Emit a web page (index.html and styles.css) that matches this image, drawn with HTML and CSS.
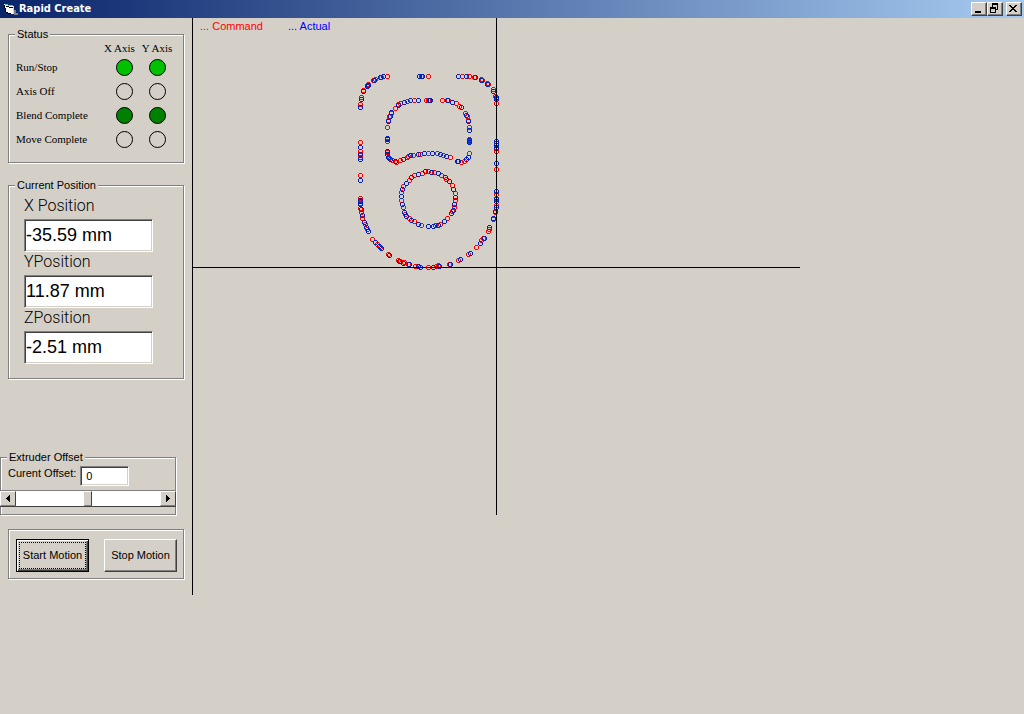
FILE: index.html
```html
<!DOCTYPE html>
<html lang="en">
<head>
<meta charset="utf-8">
<title>Rapid Create</title>
<link rel="stylesheet" href="styles.css">
</head>
<body>
<header class="titlebar">
  <svg class="app-icon" width="15" height="13" viewBox="0 0 15 13" shape-rendering="crispEdges" aria-hidden="true">
    <path d="M0 1h4v1h5v3H0z" fill="#fff"/>
    <path d="M1 1h3v1h5v1H4V2H1z" fill="#00e0e0"/>
    <path d="M1 4h4v1h4v6H5v-1H2V9H1z" fill="#fff"/>
    <path d="M0 2h1v3H0zM1 5h1v4H1zM2 3h3v1H2zM5 4h5v1H5zM2 9h2v1H2zM4 10h3v1H4z" fill="#000"/>
    <path d="M9 3h1v8H9z" fill="#d4d0c8"/>
    <path d="M10 7h2v3h2v2h-4z" fill="#808080"/>
  </svg>
  <h1 class="title">Rapid Create</h1>
  <div class="window-controls">
    <button class="win-btn" type="button" aria-label="Minimize"><svg width="12" height="10" viewBox="0 0 12 10" shape-rendering="crispEdges"><path d="M3 8h6v2H3z"/></svg></button>
    <button class="win-btn" type="button" aria-label="Restore"><svg width="12" height="10" viewBox="0 0 12 10" shape-rendering="crispEdges"><path fill-rule="evenodd" d="M4 0h6v7H8V6h1V2H5v2H4zM2 4h6v6H2zM3 6v3h4V6z"/></svg></button>
    <button class="win-btn win-close" type="button" aria-label="Close"><svg width="12" height="10" viewBox="0 0 12 10" shape-rendering="crispEdges"><path d="M2 2h2v1h1v1h2V3h1V2h2v1H9v1H8v1H7v1h1v1h1v1h1v1H8V8H7V7H5v1H4v1H2V8h1V7h1V6h1V5H4V4H3V3H2z"/></svg></button>
  </div>
</header>
<main class="workspace">
  <section class="sidebar">
    <fieldset class="group status">
      <legend>Status</legend>
      <table class="axes">
        <thead>
          <tr><td class="col-name"></td><th class="col-x" scope="col">X Axis</th><th class="col-y" scope="col">Y Axis</th></tr>
        </thead>
        <tbody>
          <tr><th scope="row">Run/Stop</th><td class="cell-x"><span class="led led-on"></span></td><td><span class="led led-on"></span></td></tr>
          <tr><th scope="row">Axis Off</th><td class="cell-x"><span class="led"></span></td><td><span class="led"></span></td></tr>
          <tr><th scope="row">Blend Complete</th><td class="cell-x"><span class="led led-done"></span></td><td><span class="led led-done"></span></td></tr>
          <tr><th scope="row">Move Complete</th><td class="cell-x"><span class="led"></span></td><td><span class="led"></span></td></tr>
        </tbody>
      </table>
    </fieldset>

    <fieldset class="group position">
      <legend>Current Position</legend>
      <div class="readouts">
        <label for="pos-x">X Position</label>
        <input id="pos-x" class="sunken" type="text" value="-35.59 mm">
        <label for="pos-y">YPosition</label>
        <input id="pos-y" class="sunken" type="text" value="11.87 mm">
        <label for="pos-z">ZPosition</label>
        <input id="pos-z" class="sunken" type="text" value="-2.51 mm">
      </div>
    </fieldset>

    <fieldset class="group extruder">
      <legend>Extruder Offset</legend>
      <div class="offset-row">
        <label for="offset">Curent Offset:</label>
        <input id="offset" class="sunken" type="text" value="0">
      </div>
      <div class="scrollbar">
        <button class="arrow" type="button" aria-label="Decrease offset"><svg width="4" height="7" viewBox="0 0 4 7" shape-rendering="crispEdges"><path d="M3 0h1v7H3V6H2V5H1V4H0V3h1V2h1V1h1z"/></svg></button>
        <input class="track" type="range" min="-100" max="100" value="0" aria-label="Extruder offset">
        <button class="arrow" type="button" aria-label="Increase offset"><svg width="4" height="7" viewBox="0 0 4 7" shape-rendering="crispEdges"><path d="M0 0h1v1h1v1h1v1h1v1H3v1H2v1H1v1H0z"/></svg></button>
      </div>
    </fieldset>

    <div class="group motion">
      <button class="motion-btn motion-default" type="button"><span>Start Motion</span></button>
      <button class="motion-btn" type="button"><span>Stop Motion</span></button>
    </div>
  </section>

  <section class="plot">
    <svg class="chart" width="608" height="498" viewBox="193 18 608 498" shape-rendering="crispEdges" role="img" aria-label="Tool path">
      <defs>
        <marker id="cmd" markerWidth="5" markerHeight="5" refX="2.5" refY="2.5" markerUnits="userSpaceOnUse"><path class="dot-cmd" d="M1 0h3v1h1v3H4v1H1V4H0V1h1zM1 1v3h3V1z"/></marker>
        <marker id="act" markerWidth="5" markerHeight="5" refX="2.5" refY="2.5" markerUnits="userSpaceOnUse"><path class="dot-act" d="M1 0h3v1h1v3H4v1H1V4H0V1h1zM1 1v3h3V1z"/></marker>
      </defs>
      <!-- outer contour -->
      <polyline class="command" points="428.5,76.5 421.5,76.5 387.5,76.5 381.5,77.5 375.5,79.5 373.5,80.5 368.5,84.5 367.5,85.5 363.5,90.5 361.5,97.5 360.5,104.5 360.5,142.5 360.5,151.5 360.5,157.5 360.5,175.5 360.5,198.5 360.5,203.5 360.5,208.5 361.5,212.5 362.5,218.5 365.5,224.5 367.5,229.5 372.5,239.5 377.5,244.5 380.5,247.5 388.5,254.5 398.5,260.5 400.5,261.5 404.5,262.5 408.5,264.5 415.5,266.5 418.5,266.5 428.5,267.5 436.5,266.5 438.5,265.5 449.5,264.5 458.5,260.5 468.5,254.5 476.5,247.5 481.5,240.5 483.5,238.5 488.5,231.5 489.5,229.5 493.5,219.5 495.5,212.5 496.5,205.5 496.5,198.5 496.5,194.5 496.5,169.5 496.5,151.5 496.5,147.5 496.5,143.5 496.5,103.5 496.5,98.5 495.5,96.5 493.5,89.5 488.5,84.5 487.5,83.5 482.5,80.5 481.5,79.5 474.5,77.5 469.5,76.5 462.5,76.5"/>
      <polyline class="actual" points="422.5,76.5 419.5,76.5 383.5,76.5 380.5,77.5 374.5,80.5 368.5,85.5 367.5,86.5 363.5,91.5 361.5,99.5 360.5,107.5 360.5,147.5 360.5,154.5 360.5,159.5 360.5,180.5 360.5,200.5 360.5,201.5 360.5,204.5 361.5,209.5 362.5,215.5 364.5,222.5 366.5,227.5 368.5,231.5 375.5,242.5 379.5,246.5 381.5,248.5 389.5,255.5 399.5,261.5 403.5,263.5 409.5,264.5 418.5,266.5 420.5,267.5 433.5,267.5 439.5,266.5 450.5,264.5 460.5,259.5 470.5,253.5 480.5,243.5 484.5,238.5 489.5,227.5 493.5,218.5 495.5,211.5 496.5,207.5 496.5,201.5 496.5,199.5 496.5,191.5 496.5,163.5 496.5,148.5 496.5,145.5 496.5,143.5 496.5,141.5 496.5,99.5 496.5,97.5 493.5,91.5 487.5,84.5 481.5,80.5 475.5,77.5 466.5,76.5 458.5,76.5"/>
      <!-- upper pocket -->
      <polyline class="command" points="426.5,100.5 428.5,100.5 442.5,100.5 448.5,100.5 456.5,103.5 459.5,106.5 465.5,113.5 467.5,116.5 468.5,120.5 469.5,127.5 469.5,139.5 469.5,141.5 469.5,153.5 466.5,159.5 464.5,161.5 461.5,162.5 450.5,157.5 443.5,155.5 437.5,153.5 428.5,153.5 420.5,154.5 413.5,155.5 408.5,156.5 407.5,157.5 400.5,160.5 396.5,162.5 392.5,160.5 389.5,158.5 387.5,152.5 387.5,141.5 387.5,127.5 388.5,120.5 389.5,116.5 391.5,113.5 395.5,108.5 398.5,104.5 400.5,103.5 407.5,101.5 414.5,100.5"/>
      <polyline class="actual" points="429.5,100.5 430.5,100.5 447.5,100.5 452.5,102.5 461.5,107.5 466.5,115.5 468.5,121.5 469.5,130.5 469.5,140.5 469.5,142.5 468.5,157.5 466.5,159.5 458.5,161.5 457.5,161.5 446.5,156.5 440.5,154.5 432.5,153.5 424.5,153.5 418.5,154.5 410.5,155.5 403.5,159.5 395.5,161.5 390.5,159.5 388.5,157.5 387.5,154.5 387.5,151.5 387.5,139.5 387.5,138.5 388.5,121.5 390.5,116.5 391.5,112.5 398.5,105.5 404.5,102.5 410.5,100.5 418.5,100.5"/>
      <!-- round pocket -->
      <polyline class="command" points="425.5,171.5 428.5,171.5 434.5,172.5 441.5,175.5 446.5,179.5 452.5,185.5 455.5,193.5 455.5,200.5 454.5,207.5 452.5,211.5 447.5,218.5 440.5,224.5 435.5,225.5 421.5,225.5 414.5,221.5 409.5,218.5 405.5,214.5 403.5,207.5 401.5,200.5 401.5,192.5 403.5,186.5 409.5,180.5 414.5,175.5 422.5,173.5"/>
      <polyline class="actual" points="425.5,171.5 431.5,172.5 438.5,173.5 445.5,177.5 449.5,181.5 453.5,189.5 455.5,197.5 454.5,204.5 453.5,210.5 451.5,213.5 444.5,221.5 438.5,225.5 433.5,226.5 428.5,226.5 418.5,224.5 411.5,220.5 406.5,216.5 404.5,212.5 402.5,204.5 401.5,196.5 402.5,189.5 406.5,183.5 411.5,177.5 418.5,174.5"/>
      <path class="axis" d="M193 267.5H800M496.5 18V515"/>
    </svg>
    <div class="key"><span class="key-cmd">... Command</span><span class="key-act">... Actual</span></div>
  </section>
</main>
</body>
</html>
```
FILE: styles.css
```css
* { box-sizing: border-box; }

body {
  margin: 0;
  min-height: 100vh;
  background: #d4d0c8;
  color: #000;
  font: 11px/14px "Liberation Sans", Arial, sans-serif;
}

button, input { font: inherit; color: inherit; margin: 0; }

.titlebar {
  display: flex;
  align-items: center;
  height: 18px;
  padding: 0 2px 0 4px;
  background: linear-gradient(90deg, #0a246a, #a6caf0);
}
.title {
  flex: 1;
  margin: 0;
  color: #fff;
  font: bold 11px/18px "DejaVu Sans Condensed", "DejaVu Sans", sans-serif;
}
.window-controls { display: flex; }
.win-btn {
  display: flex;
  width: 16px;
  height: 14px;
  padding: 0;
  border: 1px solid;
  border-color: #fff #404040 #404040 #fff;
  background: #d4d0c8;
  box-shadow: inset -1px -1px 0 #808080;
}
.win-close { margin-left: 3px; }

.workspace { display: flex; align-items: flex-start; }
.sidebar {
  flex: none;
  width: 193px;
  padding: 9px 8px 16px 8px;
  border-right: 1px solid #000;
}

.group {
  width: 176px;
  margin: 0;
  padding: 0;
  border: 1px solid #808080;
  box-shadow: 1px 1px 0 #fff, inset 1px 1px 0 #fff;
}
.group legend {
  margin-left: 6px;
  padding: 0 2px;
  background: #d4d0c8;
}

.status { padding-bottom: 11px; }
.axes {
  width: 157px;
  margin-left: 7px;
  table-layout: fixed;
  border-collapse: collapse;
  font: 11px/14px "Liberation Serif", "Times New Roman", serif;
}
.axes th, .axes td { padding: 0; font-weight: normal; text-align: center; white-space: nowrap; }
.axes tbody tr { height: 24px; }
.axes tbody th, .axes .col-x { text-align: left; }
.axes .cell-x { padding-left: 3px; }
.col-name { width: 88px; }
.col-x { width: 37px; }
.col-y { width: 32px; }
.led {
  display: block;
  width: 17px;
  height: 17px;
  margin: 0 auto;
  border: 1px solid #000;
  border-radius: 50%;
}
.led-on { background: #00c000; }
.led-done { background: #008000; }

.sunken {
  display: block;
  border: 1px solid;
  border-color: #808080 #fff #fff #808080;
  border-radius: 0;
  background: #fff;
  box-shadow: inset 1px 1px 0 #404040, inset -1px -1px 0 #d4d0c8;
}

.position { margin-top: 15px; }
.readouts { padding: 4px 15px 14px; }
.readouts label { display: block; margin-bottom: 3px; font: 300 16px/20px Roboto, "Liberation Sans", sans-serif; }
.readouts .sunken { width: 129px; height: 33px; padding: 0 1px; font-size: 18px; }

.extruder { margin: 71px 0 0 -8px; padding-bottom: 7px; }
.offset-row { display: flex; gap: 4px; padding: 2px 0 0 7px; }
.offset-row .sunken { width: 49px; height: 20px; padding: 0 5px; }
.scrollbar {
  display: flex;
  height: 17px;
  margin: 4px -1px 0;
  border-top: 1px solid #808080;
  border-bottom: 1px solid #404040;
}
.arrow {
  display: flex;
  flex: none;
  align-items: center;
  justify-content: center;
  width: 16px;
  padding: 0;
  border: 1px solid;
  border-color: #fff #404040 #808080 #fff;
  background: #d4d0c8;
}
.track {
  flex: 1;
  min-width: 0;
  appearance: none;
  background: #fff;
  border-radius: 0;
}
.track::-webkit-slider-thumb {
  appearance: none;
  width: 8px;
  height: 15px;
  border: 1px solid;
  border-color: #fff #404040 #808080 #d4d0c8;
  border-radius: 0;
  background: #d4d0c8;
}

.motion { display: flex; gap: 15px; margin-top: 14px; padding: 9px 7px 6px; }
.motion-btn {
  flex: none;
  width: 73px;
  height: 33px;
  padding: 0 1px 2px;
  border: 1px solid;
  border-color: #fff #404040 #404040 #fff;
  background: #d4d0c8;
  box-shadow: inset -1px -1px 0 #808080;
  white-space: nowrap;
}
.motion-default {
  padding: 2px;
  border-color: #000;
  box-shadow: inset 1px 1px 0 #fff, inset -1px -1px 0 #404040, inset -2px -2px 0 #808080;
}
.motion-btn span { display: flex; align-items: center; justify-content: center; height: 100%; }
.motion-default span { padding-bottom: 2px; border: 1px dotted #000; }

.plot { position: relative; flex: 1; min-width: 0; }
.chart { display: block; }
.axis { stroke: #000; fill: none; }
.command, .actual { fill: none; stroke: none; }
.command { marker: url(#cmd); }
.actual { marker: url(#act); }
.dot-cmd { fill: #f00; fill-rule: evenodd; }
.dot-act { fill: #0020c0; fill-rule: evenodd; }
.key { position: absolute; top: 1px; left: 7px; display: flex; gap: 25px; }
.key-cmd { color: #f00; }
.key-act { color: #00f; }
```
